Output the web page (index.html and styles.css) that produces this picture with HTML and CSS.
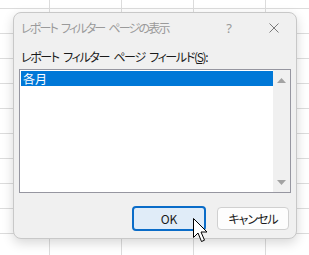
FILE: index.html
```html
<!DOCTYPE html>
<html lang="ja">

<head>
	<meta charset="UTF-8">
	<title>レポート フィルター ページの表示</title>
	<link rel="stylesheet" href="styles.css">
</head>

<body>
	<div class="dialog">
		<div class="titlebar">
			<span class="title">レポート フィルター ページの表示</span>
			<span class="help">?</span>
			<span class="close">
				<svg width="10" height="10" viewBox="0 0 10 10">
					<path d="M0.5 0.5 L9.5 9.5 M9.5 0.5 L0.5 9.5" stroke="#7a7a7a" stroke-width="1" fill="none" />
				</svg>
			</span>
		</div>

		<div class="content">
			<div class="field-label">レポート フィルター ページ フィールド(<u>S</u>):</div>

			<div class="listbox">
				<ul class="items">
					<li class="item selected">各月</li>
				</ul>
				<div class="scrollbar">
					<svg width="9" height="5" viewBox="0 0 9 5"><path d="M4.5 0 L9 5 L0 5 Z" fill="#a3a3a3" /></svg>
					<svg width="9" height="5" viewBox="0 0 9 5"><path d="M0 0 L9 0 L4.5 5 Z" fill="#a3a3a3" /></svg>
				</div>
			</div>

			<div class="buttons">
				<button class="btn btn-default">OK</button>
				<button class="btn btn-cancel">キャンセル</button>
			</div>
		</div>
	</div>

	<!-- mouse pointer over the OK button -->
	<svg class="cursor" width="17" height="25" viewBox="0 0 17 25">
		<path d="M0.5 0.5 L0.5 19.5 L5 15 L8.5 23.5 L11.5 22.2 L8 14 L14 14 Z" fill="#ffffff" stroke="#000000" stroke-width="1" stroke-linejoin="miter" />
	</svg>
</body>

</html>
```

FILE: styles.css
```css
body {
	margin: 0;
	padding: 12px 0 0 13px;
	min-height: 255px;
	box-sizing: border-box;
	font-family: "Noto Sans CJK JP", "Noto Sans", sans-serif;
	font-feature-settings: "palt";
	font-size: 12px;
	color: #1a1a1a;
	background-color: #ffffff;
	background-image:
		linear-gradient(to right, #dcdcdc 1px, transparent 1px),
		linear-gradient(to bottom, #dcdcdc 1px, transparent 1px);
	background-size: 72px 25px;
	background-position: 49px 8px;
	position: relative;
	overflow: hidden;
}

.dialog {
	width: 284px;
	height: 227px;
	box-sizing: border-box;
	background-color: #f0f0f0;
	border: 1px solid #c8c8c8;
	border-radius: 8px;
	box-shadow: 0 4px 12px rgba(0, 0, 0, 0.16);
	display: flex;
	flex-direction: column;
}

.titlebar {
	height: 29px;
	display: flex;
	align-items: center;
	padding-left: 7px;
}

.title {
	color: #9a9a9a;
	flex: 1;
	line-height: 16px;
	letter-spacing: -1.8px;
	word-spacing: 3px;
}

.help {
	color: #9a9a9a;
	width: 12px;
	text-align: center;
	font-family: "Noto Sans", sans-serif;
	font-size: 13px;
	margin-right: 34px;
}

.close {
	display: flex;
	margin-right: 17px;
}

.content {
	padding: 7px 5px 0 5px;
	display: flex;
	flex-direction: column;
}

.field-label {
	line-height: 16px;
	padding-left: 2px;
	margin-bottom: 4px;
	letter-spacing: -1.35px;
	word-spacing: 3px;
}

.listbox {
	height: 124px;
	box-sizing: border-box;
	border: 1px solid #9696a0;
	background-color: #ffffff;
	display: flex;
}

.items {
	list-style: none;
	margin: 0;
	padding: 1px 0 0 1px;
	flex: 1;
}

.item {
	height: 15px;
	line-height: 15px;
	padding-left: 2px;
}

.selected {
	background-color: #0078d7;
	color: #ffffff;
}

.scrollbar {
	width: 17px;
	background-color: #f0f0f0;
	display: flex;
	flex-direction: column;
	justify-content: space-between;
	align-items: center;
	padding: 8px 0 7px 0;
}

.scrollbar svg {
	display: block;
}

.buttons {
	display: flex;
	justify-content: flex-end;
	align-items: center;
	gap: 11px;
	margin-top: 13px;
	padding-right: 2px;
}

.btn {
	font-family: inherit;
	font-feature-settings: "palt";
	font-size: 12px;
	color: #1a1a1a;
	width: 72px;
	height: 23px;
	padding: 0;
	background-color: #fdfdfd;
	border: 1px solid #d0d0d0;
	border-radius: 4px;
}

.btn-default {
	width: 74px;
	height: 25px;
	background-color: #e0ecf8;
	border: 2px solid #0a6cc8;
}

.btn-cancel {
	letter-spacing: -1px;
}

.cursor {
	position: absolute;
	left: 193px;
	top: 218px;
}
```
